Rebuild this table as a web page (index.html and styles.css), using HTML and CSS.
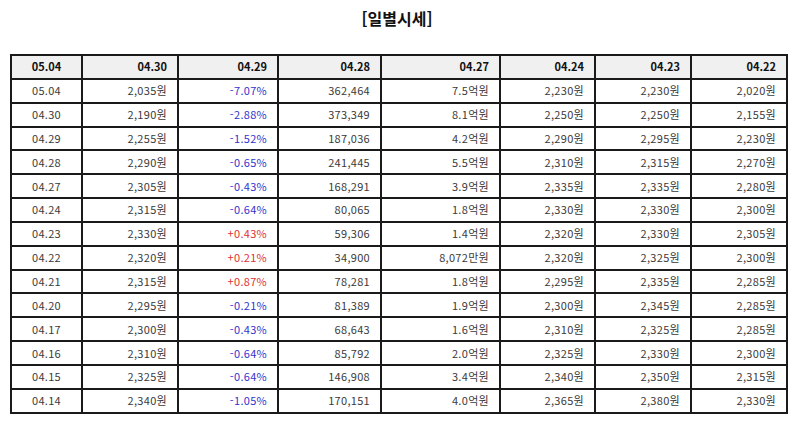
FILE: index.html
```html
<!DOCTYPE html>
<html lang="ko">
<head>
<meta charset="utf-8">
<title>일별시세</title>
<link rel="stylesheet" href="styles.css">
</head>
<body>
<div class="page">
  <h1 class="title">[일별시세]</h1>
  <table class="quotes">
    <colgroup>
      <col class="c1"><col class="c2"><col class="c3"><col class="c4"><col class="c5"><col class="c6"><col class="c7"><col class="c8">
    </colgroup>
    <thead>
      <tr><th class="date">05.04</th><th>04.30</th><th>04.29</th><th>04.28</th><th>04.27</th><th>04.24</th><th>04.23</th><th>04.22</th></tr>
    </thead>
    <tbody>
      <tr><td class="date">05.04</td><td>2,035원</td><td class="down">-7.07%</td><td>362,464</td><td>7.5억원</td><td>2,230원</td><td>2,230원</td><td>2,020원</td></tr>
      <tr><td class="date">04.30</td><td>2,190원</td><td class="down">-2.88%</td><td>373,349</td><td>8.1억원</td><td>2,250원</td><td>2,250원</td><td>2,155원</td></tr>
      <tr><td class="date">04.29</td><td>2,255원</td><td class="down">-1.52%</td><td>187,036</td><td>4.2억원</td><td>2,290원</td><td>2,295원</td><td>2,230원</td></tr>
      <tr><td class="date">04.28</td><td>2,290원</td><td class="down">-0.65%</td><td>241,445</td><td>5.5억원</td><td>2,310원</td><td>2,315원</td><td>2,270원</td></tr>
      <tr><td class="date">04.27</td><td>2,305원</td><td class="down">-0.43%</td><td>168,291</td><td>3.9억원</td><td>2,335원</td><td>2,335원</td><td>2,280원</td></tr>
      <tr><td class="date">04.24</td><td>2,315원</td><td class="down">-0.64%</td><td>80,065</td><td>1.8억원</td><td>2,330원</td><td>2,330원</td><td>2,300원</td></tr>
      <tr><td class="date">04.23</td><td>2,330원</td><td class="up">+0.43%</td><td>59,306</td><td>1.4억원</td><td>2,320원</td><td>2,330원</td><td>2,305원</td></tr>
      <tr><td class="date">04.22</td><td>2,320원</td><td class="up">+0.21%</td><td>34,900</td><td>8,072만원</td><td>2,320원</td><td>2,325원</td><td>2,300원</td></tr>
      <tr><td class="date">04.21</td><td>2,315원</td><td class="up">+0.87%</td><td>78,281</td><td>1.8억원</td><td>2,295원</td><td>2,335원</td><td>2,285원</td></tr>
      <tr><td class="date">04.20</td><td>2,295원</td><td class="down">-0.21%</td><td>81,389</td><td>1.9억원</td><td>2,300원</td><td>2,345원</td><td>2,285원</td></tr>
      <tr><td class="date">04.17</td><td>2,300원</td><td class="down">-0.43%</td><td>68,643</td><td>1.6억원</td><td>2,310원</td><td>2,325원</td><td>2,285원</td></tr>
      <tr><td class="date">04.16</td><td>2,310원</td><td class="down">-0.64%</td><td>85,792</td><td>2.0억원</td><td>2,325원</td><td>2,330원</td><td>2,300원</td></tr>
      <tr><td class="date">04.15</td><td>2,325원</td><td class="down">-0.64%</td><td>146,908</td><td>3.4억원</td><td>2,340원</td><td>2,350원</td><td>2,315원</td></tr>
      <tr><td class="date">04.14</td><td>2,340원</td><td class="down">-1.05%</td><td>170,151</td><td>4.0억원</td><td>2,365원</td><td>2,380원</td><td>2,330원</td></tr>
    </tbody>
  </table>
</div>
</body>
</html>
```

FILE: styles.css
```css
html, body {
  margin: 0;
  padding: 0;
  background: #ffffff;
}

.page {
  padding: 8px 10px 0 10px;
  font-family: "Noto Sans CJK KR", "Noto Sans", "DejaVu Sans", sans-serif;
  color: #3a3a3a;
}

.title {
  margin: 0 0 26px 0;
  font-size: 16px;
  line-height: 20px;
  font-weight: bold;
  color: #111111;
  text-align: center;
}

.quotes {
  width: 776px;
  table-layout: fixed;
  border-collapse: collapse;
  font-size: 11px;
}

.c1 { width: 71px; }
.c2 { width: 96px; }
.c3 { width: 100px; }
.c4 { width: 103px; }
.c5 { width: 119px; }
.c6 { width: 95px; }
.c7 { width: 96px; }
.c8 { width: 96px; }

.quotes th,
.quotes td {
  border: 2px solid #1a1a1a;
  height: 21.85px;
  padding: 0 10px 0 4px;
  text-align: right;
  line-height: 21px;
  white-space: nowrap;
}

.quotes td {
  letter-spacing: 0.3px;
}

.quotes th {
  background: #f0f0f0;
  font-weight: bold;
  color: #111111;
}

.quotes .date {
  text-align: center;
  padding: 0 4px;
}

.quotes td.down { color: #3333cc; }
.quotes td.up { color: #e03030; }
```
